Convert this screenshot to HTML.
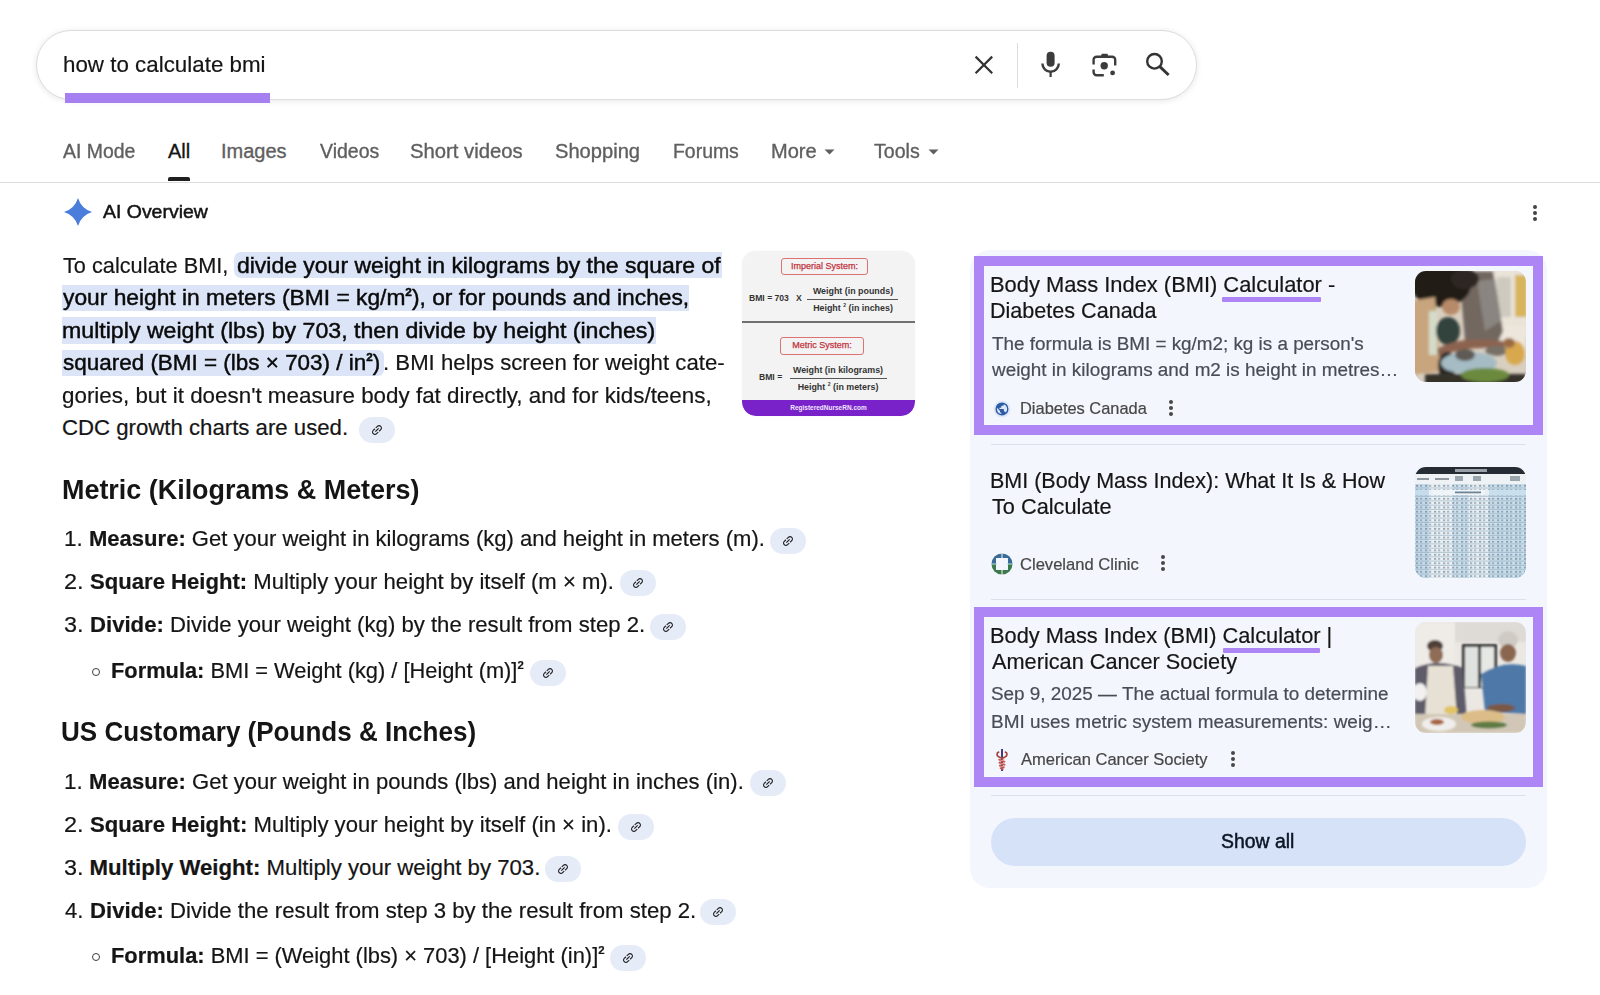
<!DOCTYPE html><html><head><meta charset="utf-8"><style>
html,body{margin:0;padding:0;background:#fff;}
body{width:1600px;height:995px;position:relative;overflow:hidden;font-family:"Liberation Sans", sans-serif;}
.tx{position:absolute;white-space:nowrap;transform-origin:0 0;}
.tx b{font-weight:bold;}
.tx sup{font-weight:bold;font-size:0.52em;vertical-align:0;position:relative;top:-0.78em;line-height:0;}
.md{-webkit-text-stroke:0.45px currentColor;}
.abs{position:absolute;}
.sbox{left:36px;top:30px;width:1159px;height:68px;border:1px solid #dcdcdc;border-radius:35px;background:#fff;box-shadow:0 1px 6px rgba(32,33,36,.10);}
.qbar{left:65px;top:93px;width:205px;height:10px;background:#a67ff0;}
.tabline{left:0;top:182px;width:1600px;height:1px;background:#dcdcdc;}
.tabul{left:168px;top:177px;width:22px;height:3.5px;background:#1f1f1f;border-radius:2px 2px 0 0;}
.chip{position:absolute;width:36px;height:26px;border-radius:13px;background:#e6ebf8;}
.chip svg{position:absolute;left:11px;top:6px;}
.bul{position:absolute;width:6px;height:6px;border:1.3px solid #3c3c3c;border-radius:50%;}
.panel{left:970px;top:250px;width:577px;height:638px;border-radius:20px;background:#f4f6fd;}
.bord{position:absolute;border:10px solid #ad85f4;box-sizing:border-box;}
.div{position:absolute;height:1px;background:#dde0e8;}
.thumb{position:absolute;width:111px;height:111px;border-radius:11px;overflow:hidden;}
.dots{position:absolute;width:4px;}
.dots i{display:block;width:4px;height:4px;border-radius:2px;background:#444;margin-bottom:2px;}
.btn{left:991px;top:818px;width:535px;height:48px;border-radius:24px;background:#d6e2f8;}
.imgcard{left:742px;top:250.5px;width:173px;height:165px;border-radius:14px;background:#f3f3f3;overflow:hidden;box-shadow:0 0 2px rgba(0,0,0,.06);}

</style></head><body>
<div class="abs sbox"></div>
<div class="abs qbar"></div>
<!-- search icons -->
<svg class="abs" style="left:972.3px;top:53px" width="24" height="24" viewBox="0 0 24 24"><path d="M3.6 3.6L20.2 20.2M20.2 3.6L3.6 20.2" stroke="#333" stroke-width="2.2" fill="none"/></svg>
<div class="abs" style="left:1017px;top:43px;width:1px;height:45px;background:#dadce0"></div>
<svg class="abs" style="left:1038px;top:50px" width="24" height="28" viewBox="0 0 24 28"><rect x="8.6" y="1.8" width="8" height="15" rx="4" fill="#3c3c3c"/><path d="M4.4 13.6a8.2 8.2 0 0 0 16.4 0" stroke="#3c3c3c" stroke-width="2.4" fill="none"/><path d="M12.6 21.5V27" stroke="#3c3c3c" stroke-width="2.2"/></svg>
<svg class="abs" style="left:1091px;top:52px" width="26" height="26" viewBox="0 0 26 26"><path d="M2.6 12.4V7.7A3 3 0 0 1 5.6 4.7H21.2A3 3 0 0 1 24.2 7.7V13.4M2.6 17.4V20.3A3 3 0 0 0 5.6 23.3H12.8" stroke="#3c3c3c" stroke-width="2.4" fill="none"/><path d="M9.4 5.6L10.8 1.7H16.4L17.8 5.6Z" fill="#3c3c3c"/><circle cx="13.2" cy="13.8" r="3.7" fill="#3c3c3c"/><circle cx="21.6" cy="20.9" r="2.4" fill="#3c3c3c"/></svg>
<svg class="abs" style="left:1144px;top:51px" width="28" height="28" viewBox="0 0 28 28"><circle cx="10.5" cy="10.3" r="7.3" stroke="#333" stroke-width="2.4" fill="none"/><path d="M15.6 15.4L24.6 24" stroke="#333" stroke-width="2.9"/></svg>
<!-- tabs -->
<div class="abs tabline"></div>
<div class="abs tabul"></div>
<svg class="abs" style="left:824px;top:149px" width="11" height="6" viewBox="0 0 11 6"><path d="M0.5 0.5h10L5.5 5.5z" fill="#5f5f5f"/></svg>
<svg class="abs" style="left:927.5px;top:149px" width="11" height="6" viewBox="0 0 11 6"><path d="M0.5 0.5h10L5.5 5.5z" fill="#5f5f5f"/></svg>
<!-- AI overview star -->
<svg class="abs" style="left:64px;top:198px" width="28" height="28" viewBox="0 0 28 28"><path d="M14 0Q17.3 10.7 28 14Q17.3 17.3 14 28Q10.7 17.3 0 14Q10.7 10.7 14 0Z" fill="#4a7ddc"/></svg>
<div class="dots" style="left:1533px;top:205px"><i></i><i></i><i></i></div>
<!-- image card -->
<div class="abs imgcard">
  <div class="abs" style="left:39px;top:7px;width:87px;height:17.5px;border:1.3px solid #dc7272;border-radius:3px;box-sizing:border-box;font-size:9px;line-height:15px;text-align:center;color:#c2323e;-webkit-text-stroke:0.25px currentColor">Imperial System:</div>
  <div class="abs" style="left:7px;top:42.5px;font-size:8.6px;color:#333;font-weight:bold;white-space:nowrap">BMI = 703&nbsp;&nbsp; X</div>
  <div class="abs" style="left:63px;top:35.5px;width:96px;text-align:center;font-size:8.9px;color:#333;font-weight:bold;white-space:nowrap">Weight (in pounds)</div>
  <div class="abs" style="left:65px;top:48.5px;width:91px;height:1.3px;background:#555"></div>
  <div class="abs" style="left:63px;top:51.5px;width:96px;text-align:center;font-size:8.9px;color:#333;font-weight:bold;white-space:nowrap">Height <sup style="font-size:5px">2</sup> (in inches)</div>
  <div class="abs" style="left:0;top:70.5px;width:173px;height:1.6px;background:#707070"></div>
  <div class="abs" style="left:38px;top:86.5px;width:84px;height:18px;border:1.3px solid #dc7272;border-radius:3px;box-sizing:border-box;font-size:9px;line-height:15.5px;text-align:center;color:#c2323e;-webkit-text-stroke:0.25px currentColor">Metric System:</div>
  <div class="abs" style="left:17px;top:121.5px;font-size:8.6px;color:#333;font-weight:bold">BMI =</div>
  <div class="abs" style="left:41px;top:114.5px;width:110px;text-align:center;font-size:8.9px;color:#333;font-weight:bold;white-space:nowrap">Weight (in kilograms)</div>
  <div class="abs" style="left:48px;top:127.5px;width:97px;height:1.3px;background:#555"></div>
  <div class="abs" style="left:41px;top:130.5px;width:110px;text-align:center;font-size:8.9px;color:#333;font-weight:bold;white-space:nowrap">Height <sup style="font-size:5px">2</sup> (in meters)</div>
  <div class="abs" style="left:0;top:149px;width:173px;height:16px;background:#7a22c9;border-radius:0 0 14px 14px;font-size:6.5px;line-height:16px;text-align:center;color:#f0e6ff;font-weight:bold">RegisteredNurseRN.com</div>
</div>
<!-- chips -->
<div class="chip" style="left:359px;top:416.75px"><svg width="14" height="14" viewBox="0 0 24 24"><path transform="rotate(-45 12 12)" d="M3.9 12c0-1.71 1.39-3.1 3.1-3.1h4V7H7c-2.76 0-5 2.24-5 5s2.24 5 5 5h4v-1.9H7c-1.71 0-3.1-1.39-3.1-3.1zM8 13h8v-2H8v2zm9-6h-4v1.9h4c1.71 0 3.1 1.39 3.1 3.1s-1.39 3.1-3.1 3.1h-4V17h4c2.76 0 5-2.24 5-5s-2.24-5-5-5z" fill="#1f1f1f"/></svg></div>
<div class="chip" style="left:770.0px;top:527.75px"><svg width="14" height="14" viewBox="0 0 24 24"><path transform="rotate(-45 12 12)" d="M3.9 12c0-1.71 1.39-3.1 3.1-3.1h4V7H7c-2.76 0-5 2.24-5 5s2.24 5 5 5h4v-1.9H7c-1.71 0-3.1-1.39-3.1-3.1zM8 13h8v-2H8v2zm9-6h-4v1.9h4c1.71 0 3.1 1.39 3.1 3.1s-1.39 3.1-3.1 3.1h-4V17h4c2.76 0 5-2.24 5-5s-2.24-5-5-5z" fill="#1f1f1f"/></svg></div>
<div class="chip" style="left:619.5px;top:570.45px"><svg width="14" height="14" viewBox="0 0 24 24"><path transform="rotate(-45 12 12)" d="M3.9 12c0-1.71 1.39-3.1 3.1-3.1h4V7H7c-2.76 0-5 2.24-5 5s2.24 5 5 5h4v-1.9H7c-1.71 0-3.1-1.39-3.1-3.1zM8 13h8v-2H8v2zm9-6h-4v1.9h4c1.71 0 3.1 1.39 3.1 3.1s-1.39 3.1-3.1 3.1h-4V17h4c2.76 0 5-2.24 5-5s-2.24-5-5-5z" fill="#1f1f1f"/></svg></div>
<div class="chip" style="left:649.5px;top:613.55px"><svg width="14" height="14" viewBox="0 0 24 24"><path transform="rotate(-45 12 12)" d="M3.9 12c0-1.71 1.39-3.1 3.1-3.1h4V7H7c-2.76 0-5 2.24-5 5s2.24 5 5 5h4v-1.9H7c-1.71 0-3.1-1.39-3.1-3.1zM8 13h8v-2H8v2zm9-6h-4v1.9h4c1.71 0 3.1 1.39 3.1 3.1s-1.39 3.1-3.1 3.1h-4V17h4c2.76 0 5-2.24 5-5s-2.24-5-5-5z" fill="#1f1f1f"/></svg></div>
<div class="chip" style="left:529.5px;top:659.75px"><svg width="14" height="14" viewBox="0 0 24 24"><path transform="rotate(-45 12 12)" d="M3.9 12c0-1.71 1.39-3.1 3.1-3.1h4V7H7c-2.76 0-5 2.24-5 5s2.24 5 5 5h4v-1.9H7c-1.71 0-3.1-1.39-3.1-3.1zM8 13h8v-2H8v2zm9-6h-4v1.9h4c1.71 0 3.1 1.39 3.1 3.1s-1.39 3.1-3.1 3.1h-4V17h4c2.76 0 5-2.24 5-5s-2.24-5-5-5z" fill="#1f1f1f"/></svg></div>
<div class="chip" style="left:749.5px;top:770.45px"><svg width="14" height="14" viewBox="0 0 24 24"><path transform="rotate(-45 12 12)" d="M3.9 12c0-1.71 1.39-3.1 3.1-3.1h4V7H7c-2.76 0-5 2.24-5 5s2.24 5 5 5h4v-1.9H7c-1.71 0-3.1-1.39-3.1-3.1zM8 13h8v-2H8v2zm9-6h-4v1.9h4c1.71 0 3.1 1.39 3.1 3.1s-1.39 3.1-3.1 3.1h-4V17h4c2.76 0 5-2.24 5-5s-2.24-5-5-5z" fill="#1f1f1f"/></svg></div>
<div class="chip" style="left:617.5px;top:813.55px"><svg width="14" height="14" viewBox="0 0 24 24"><path transform="rotate(-45 12 12)" d="M3.9 12c0-1.71 1.39-3.1 3.1-3.1h4V7H7c-2.76 0-5 2.24-5 5s2.24 5 5 5h4v-1.9H7c-1.71 0-3.1-1.39-3.1-3.1zM8 13h8v-2H8v2zm9-6h-4v1.9h4c1.71 0 3.1 1.39 3.1 3.1s-1.39 3.1-3.1 3.1h-4V17h4c2.76 0 5-2.24 5-5s-2.24-5-5-5z" fill="#1f1f1f"/></svg></div>
<div class="chip" style="left:544.8px;top:856.25px"><svg width="14" height="14" viewBox="0 0 24 24"><path transform="rotate(-45 12 12)" d="M3.9 12c0-1.71 1.39-3.1 3.1-3.1h4V7H7c-2.76 0-5 2.24-5 5s2.24 5 5 5h4v-1.9H7c-1.71 0-3.1-1.39-3.1-3.1zM8 13h8v-2H8v2zm9-6h-4v1.9h4c1.71 0 3.1 1.39 3.1 3.1s-1.39 3.1-3.1 3.1h-4V17h4c2.76 0 5-2.24 5-5s-2.24-5-5-5z" fill="#1f1f1f"/></svg></div>
<div class="chip" style="left:700.2px;top:899.25px"><svg width="14" height="14" viewBox="0 0 24 24"><path transform="rotate(-45 12 12)" d="M3.9 12c0-1.71 1.39-3.1 3.1-3.1h4V7H7c-2.76 0-5 2.24-5 5s2.24 5 5 5h4v-1.9H7c-1.71 0-3.1-1.39-3.1-3.1zM8 13h8v-2H8v2zm9-6h-4v1.9h4c1.71 0 3.1 1.39 3.1 3.1s-1.39 3.1-3.1 3.1h-4V17h4c2.76 0 5-2.24 5-5s-2.24-5-5-5z" fill="#1f1f1f"/></svg></div>
<div class="chip" style="left:610.2px;top:944.75px"><svg width="14" height="14" viewBox="0 0 24 24"><path transform="rotate(-45 12 12)" d="M3.9 12c0-1.71 1.39-3.1 3.1-3.1h4V7H7c-2.76 0-5 2.24-5 5s2.24 5 5 5h4v-1.9H7c-1.71 0-3.1-1.39-3.1-3.1zM8 13h8v-2H8v2zm9-6h-4v1.9h4c1.71 0 3.1 1.39 3.1 3.1s-1.39 3.1-3.1 3.1h-4V17h4c2.76 0 5-2.24 5-5s-2.24-5-5-5z" fill="#1f1f1f"/></svg></div>
<div class="bul" style="left:92.2px;top:667.5px"></div>
<div class="bul" style="left:92.2px;top:952.5px"></div>
<!-- right panel -->
<div class="abs panel"></div>
<div class="bord" style="left:974px;top:256px;width:569px;height:179px"></div>
<div class="bord" style="left:973.5px;top:607px;width:569px;height:180px"></div>
<div class="abs" style="left:1222px;top:297px;width:99px;height:5px;background:#ad85f4;border-radius:1px"></div>
<div class="abs" style="left:1223px;top:647.5px;width:97px;height:5px;background:#ad85f4;border-radius:1px"></div>
<div class="div" style="left:991px;top:444px;width:535px"></div>
<div class="div" style="left:991px;top:599px;width:535px"></div>
<div class="div" style="left:991px;top:795px;width:535px"></div>
<div class="abs btn"></div>
<!-- favicons -->
<svg class="abs" style="left:993px;top:400px" width="18" height="18" viewBox="0 0 18 18"><circle cx="9" cy="9" r="8.6" fill="#dde8fa"/><g transform="translate(1.3 1.3) scale(0.64)"><circle cx="12" cy="12" r="10.2" fill="#2d5aa3"/><path d="M11 19.93c-3.95-.49-7-3.85-7-7.93 0-.62.08-1.21.21-1.79L9 15v1c0 1.1.9 2 2 2v1.93zM17.9 17.39c-.26-.81-1-1.39-1.9-1.39h-1v-3c0-.55-.45-1-1-1H8v-2h2c.55 0 1-.45 1-1V7h2c1.1 0 2-.9 2-2v-.41c2.93 1.19 5 4.06 5 7.41 0 2.08-.8 3.97-2.1 5.39z" fill="#dbe6fa"/></g></svg>
<svg class="abs" style="left:990.9px;top:553.1px" width="22" height="22" viewBox="0 0 22 22"><defs><clipPath id="ccc"><path d="M0 0H22V22H0Z M5 5.5Q5 5 5.5 5H16.5Q17 5 17 5.5V16.5Q17 17 16.5 17H5.5Q5 17 5 16.5Z" clip-rule="evenodd"/></clipPath></defs><g clip-path="url(#ccc)"><path d="M0.5 11A10.5 10.5 0 0 1 21.5 11Z" fill="#3a6c98"/><path d="M0.5 11A10.5 10.5 0 0 0 21.5 11Z" fill="#3c7a4c"/></g><rect x="10.5" y="0" width="1" height="6" fill="#f3f5fc"/><rect x="10.5" y="16" width="1" height="6" fill="#f3f5fc"/><rect x="0" y="10.5" width="6" height="1" fill="#b9dcd8"/><rect x="16" y="10.5" width="6" height="1" fill="#b9dcd8"/></svg>
<svg class="abs" style="left:994px;top:747px" width="16" height="26" viewBox="0 0 16 26"><path d="M8 2v22" stroke="#33357a" stroke-width="1.9"/><path d="M4.6 5.2C2.6 5.6 2.4 8.6 4.6 9.8L8.4 11.6M11.4 5.2C13.4 5.6 13.6 8.6 11.4 9.8L7.4 11.8" stroke="#a8443f" stroke-width="1.7" fill="none" stroke-linecap="round"/><path d="M5.2 12.6L10.6 14.8M5.4 15.6L10.6 17.8M5.8 18.6L9.8 20.4M6.6 21.2L8.8 22.2" stroke="#c4564e" stroke-width="1.7" fill="none" stroke-linecap="round"/><path d="M10.4 12.6L5.6 14.4M10.4 15.8L5.8 17.4M9.8 18.8L6.2 20.2" stroke="#e8938a" stroke-width="1.1" fill="none"/></svg>
<div class="dots" style="left:1169px;top:400px"><i style="background:#474747"></i><i style="background:#474747"></i><i style="background:#474747"></i></div>
<div class="dots" style="left:1160.5px;top:555px"><i style="background:#474747"></i><i style="background:#474747"></i><i style="background:#474747"></i></div>
<div class="dots" style="left:1230.5px;top:751px"><i style="background:#474747"></i><i style="background:#474747"></i><i style="background:#474747"></i></div>
<!-- thumbnails -->
<div class="thumb" style="left:1415px;top:271px"><svg width="111" height="111" viewBox="0 0 111 111"><defs><filter id="bl1" x="-20%" y="-20%" width="140%" height="140%"><feGaussianBlur stdDeviation="1.6"/></filter></defs>
<rect width="111" height="111" fill="#d9cfc0"/>
<g filter="url(#bl1)">
<rect x="60" y="-5" width="56" height="70" fill="#e9e3d8"/>
<rect x="82" y="6" width="14" height="40" fill="#cfcac0"/>
<rect x="100" y="4" width="12" height="42" fill="#d8b45c"/>
<rect x="70" y="55" width="41" height="30" fill="#ece6dc"/>
<path d="M44 0 L78 0 L88 60 L80 78 L50 70 Z" fill="#726860"/>
<path d="M62 10 L80 8 L86 50 L70 60Z" fill="#8a8580"/>
<ellipse cx="26" cy="14" rx="30" ry="22" fill="#231b17"/>
<ellipse cx="50" cy="8" rx="14" ry="10" fill="#2e2520"/>
<ellipse cx="36" cy="36" rx="9" ry="8" fill="#b78b6a"/>
<path d="M-4 30 L20 26 L26 100 L-4 104Z" fill="#c8a57d"/>
<rect x="14" y="40" width="8" height="44" fill="#d4dcc8"/>
<ellipse cx="33" cy="60" rx="12" ry="14" fill="#33423c"/>
<path d="M22 78 Q45 64 88 70 L90 78 Q50 74 24 86Z" fill="#8c6450"/>
<ellipse cx="32" cy="95" rx="9" ry="14" fill="#2b2826"/>
<ellipse cx="54" cy="92" rx="28" ry="11" fill="#a5bcc4"/>
<ellipse cx="50" cy="84" rx="10" ry="6" fill="#5e5a55"/>
<ellipse cx="82" cy="80" rx="12" ry="5" fill="#777066"/>
<ellipse cx="100" cy="82" rx="10" ry="12" fill="#d8a84e"/>
<ellipse cx="94" cy="72" rx="6" ry="5" fill="#9b6a42"/>
<rect x="10" y="103" width="101" height="12" fill="#35302b"/>
<ellipse cx="70" cy="104" rx="24" ry="7" fill="#6c8a3e"/>
</g></svg></div>
<div class="thumb" style="left:1415px;top:467px"><svg width="111" height="111" viewBox="0 0 111 111"><defs>
<pattern id="rows" width="9" height="4.3" patternUnits="userSpaceOnUse"><rect y="3.2" width="9" height="1" fill="#7f98ad" opacity=".55"/><rect x="1" y="0.8" width="2.2" height="1.6" fill="#55606a" opacity=".55"/><rect x="5" y="0.8" width="2.2" height="1.6" fill="#55606a" opacity=".45"/></pattern></defs>
<rect width="111" height="111" fill="#d3e5f1"/>
<rect x="0" y="17" width="14" height="94" fill="#c5dcec"/>
<rect x="14" y="17" width="24" height="94" fill="#e9f1f6"/>
<rect x="38" y="17" width="16" height="94" fill="#cde1ef"/>
<rect x="54" y="17" width="20" height="94" fill="#e6eff5"/>
<rect x="74" y="17" width="37" height="94" fill="#c9dfee"/>
<rect y="28" width="111" height="83" fill="url(#rows)"/>
<rect y="17" width="111" height="6" fill="url(#rows)"/>
<rect x="18" y="23" width="52" height="5" fill="#eef4f8"/>
<rect x="40" y="24.5" width="26" height="1.8" fill="#6f8597"/>
<rect width="111" height="7" fill="#262c33"/>
<rect x="40" y="2" width="32" height="3" fill="#b8bec6" opacity=".8"/>
<rect y="7" width="111" height="10" fill="#eef2f5"/>
<rect x="2" y="11" width="12" height="2" fill="#8c979f"/><rect x="20" y="11" width="14" height="2" fill="#8c979f"/><rect x="40" y="9" width="8" height="5" fill="#9aa6ae"/><rect x="58" y="9" width="8" height="5" fill="#9aa6ae"/><rect x="95" y="9" width="10" height="5" fill="#9aa6ae"/>
</svg></div>
<div class="thumb" style="left:1415px;top:622px"><svg width="111" height="111" viewBox="0 0 111 111"><defs><filter id="bl3" x="-20%" y="-20%" width="140%" height="140%"><feGaussianBlur stdDeviation="1.3"/></filter></defs>
<rect width="111" height="111" fill="#ebe7e3"/>
<g filter="url(#bl3)">
<rect x="40" y="0" width="71" height="20" fill="#dedad5"/>
<rect x="47" y="22" width="35" height="44" fill="#303030"/>
<rect x="50" y="25" width="13" height="40" fill="#dfe2de"/>
<rect x="66" y="25" width="13" height="40" fill="#e6e8e4"/>
<rect x="0" y="0" width="40" height="55" fill="#efebe7"/>
<ellipse cx="20" cy="24" rx="8" ry="6" fill="#4e4038"/>
<ellipse cx="21" cy="33" rx="7" ry="8" fill="#8e6c55"/>
<path d="M0 46 Q22 36 48 46 L52 100 L0 100Z" fill="#5f5c6a"/>
<path d="M13 44 L38 44 L42 96 L10 96Z" fill="#e6e1d4"/>
<ellipse cx="5" cy="70" rx="7" ry="9" fill="#f2f0f0"/>
<ellipse cx="93" cy="18" rx="10" ry="9" fill="#cfcbc4"/>
<ellipse cx="93" cy="31" rx="8" ry="9" fill="#8a6650"/>
<path d="M66 52 Q88 38 111 44 L111 92 L70 90Z" fill="#4d78a8"/>
<ellipse cx="86" cy="86" rx="14" ry="4" fill="#7a5844"/>
<rect x="0" y="92" width="111" height="19" fill="#d2c7b6"/>
<ellipse cx="68" cy="95" rx="22" ry="7" fill="#dcbd88"/>
<ellipse cx="74" cy="103" rx="18" ry="3.5" fill="#5f7c45"/>
<ellipse cx="24" cy="102" rx="17" ry="7" fill="#f0eeec"/>
<ellipse cx="22" cy="100" rx="7" ry="3" fill="#a8643c"/>
<ellipse cx="36" cy="88" rx="7" ry="4" fill="#e2c464"/>
</g></svg></div>
<div class="abs" style="left:233.6px;top:252.3px;width:488.8px;height:26.2px;background:#dce5f7;border-radius:7px 0 0 7px"></div>
<div class="abs" style="left:62px;top:284.8px;width:626.6px;height:26.6px;background:#dce5f7"></div>
<div class="abs" style="left:62px;top:317.3px;width:594px;height:26.5px;background:#dce5f7"></div>
<div class="abs" style="left:62px;top:349.9px;width:321.5px;height:26.3px;background:#dce5f7;border-radius:0 6px 6px 0"></div>
<div class="tx" id="q" style="left:63.01px;top:47.50px;font-size:22.5px;line-height:34px;color:#151515;-webkit-text-stroke:0.2px currentColor;transform:scaleX(0.9936)">how to calculate bmi</div>
<div class="tx" id="tab1" style="left:62.50px;top:136.25px;font-size:20px;line-height:30px;color:#5f5f5f;-webkit-text-stroke:0.35px currentColor;transform:scaleX(0.9703)">AI Mode</div>
<div class="tx" id="tab2" style="left:168.00px;top:136.25px;font-size:20px;line-height:30px;color:#151515;-webkit-text-stroke:0.35px currentColor;transform:scaleX(1.0000)">All</div>
<div class="tx" id="tab3" style="left:221.00px;top:136.25px;font-size:20px;line-height:30px;color:#5f5f5f;-webkit-text-stroke:0.35px currentColor;transform:scaleX(1.0000)">Images</div>
<div class="tx" id="tab4" style="left:319.50px;top:136.25px;font-size:20px;line-height:30px;color:#5f5f5f;-webkit-text-stroke:0.35px currentColor;transform:scaleX(0.9750)">Videos</div>
<div class="tx" id="tab5" style="left:410.49px;top:136.25px;font-size:20px;line-height:30px;color:#5f5f5f;-webkit-text-stroke:0.35px currentColor;transform:scaleX(1.0136)">Short videos</div>
<div class="tx" id="tab6" style="left:555.49px;top:136.25px;font-size:20px;line-height:30px;color:#5f5f5f;-webkit-text-stroke:0.35px currentColor;transform:scaleX(1.0060)">Shopping</div>
<div class="tx" id="tab7" style="left:672.73px;top:136.25px;font-size:20px;line-height:30px;color:#5f5f5f;-webkit-text-stroke:0.35px currentColor;transform:scaleX(0.9712)">Forums</div>
<div class="tx" id="tab8" style="left:770.70px;top:136.25px;font-size:20px;line-height:30px;color:#5f5f5f;-webkit-text-stroke:0.35px currentColor;transform:scaleX(1.0023)">More</div>
<div class="tx" id="tab9" style="left:874.00px;top:136.25px;font-size:20px;line-height:30px;color:#5f5f5f;-webkit-text-stroke:0.35px currentColor;transform:scaleX(0.9783)">Tools</div>
<div class="tx" id="aio" style="left:103.00px;top:197.50px;font-size:18.9px;line-height:28px;color:#141414;-webkit-text-stroke:0.5px currentColor;transform:scaleX(1.0294)">AI Overview</div>
<div class="tx" id="p1a" style="left:63.00px;top:249.00px;font-size:22.2px;line-height:33px;color:#151515;-webkit-text-stroke:0.2px currentColor;transform:scaleX(0.9790)">To calculate BMI,</div>
<div class="tx" id="p1b" style="left:236.57px;top:249.00px;font-size:22.2px;line-height:33px;color:#0a0a0a;-webkit-text-stroke:0.2px currentColor;transform:scaleX(1.0347)"><span class="md">divide your weight in kilograms by the square of</span></div>
<div class="tx" id="p2" style="left:62.50px;top:281.40px;font-size:22.2px;line-height:33px;color:#0a0a0a;-webkit-text-stroke:0.2px currentColor;transform:scaleX(1.0264)"><span class="md">your height in meters (BMI = kg/m<sup>2</sup>), or for pounds and inches,</span></div>
<div class="tx" id="p3" style="left:61.96px;top:313.80px;font-size:22.2px;line-height:33px;color:#0a0a0a;-webkit-text-stroke:0.2px currentColor;transform:scaleX(1.0432)"><span class="md">multiply weight (lbs) by 703, then divide by height (inches)</span></div>
<div class="tx" id="p4a" style="left:63.00px;top:346.20px;font-size:22.2px;line-height:33px;color:#0a0a0a;-webkit-text-stroke:0.2px currentColor;transform:scaleX(1.0120)"><span class="md">squared (BMI = (lbs × 703) / in<sup>2</sup>)</span></div>
<div class="tx" id="p4b" style="left:382.75px;top:346.20px;font-size:22.2px;line-height:33px;color:#151515;-webkit-text-stroke:0.2px currentColor;transform:scaleX(1.0001)">. BMI helps screen for weight cate-</div>
<div class="tx" id="p5" style="left:61.99px;top:378.60px;font-size:22.2px;line-height:33px;color:#151515;-webkit-text-stroke:0.2px currentColor;transform:scaleX(1.0089)">gories, but it doesn't measure body fat directly, and for kids/teens,</div>
<div class="tx" id="p6" style="left:62.00px;top:411.00px;font-size:22.2px;line-height:33px;color:#151515;-webkit-text-stroke:0.2px currentColor;transform:scaleX(1.0000)">CDC growth charts are used.</div>
<div class="tx" id="h1" style="left:61.66px;top:468.50px;font-size:27.8px;line-height:42px;color:#151515;font-weight:bold;transform:scaleX(0.9683)">Metric (Kilograms &amp; Meters)</div>
<div class="tx" id="h2" style="left:61.13px;top:711.00px;font-size:27.8px;line-height:42px;color:#151515;font-weight:bold;transform:scaleX(0.9364)">US Customary (Pounds &amp; Inches)</div>
<div class="tx" id="m1n" style="left:64.49px;top:522.00px;font-size:22.2px;line-height:33px;color:#151515;-webkit-text-stroke:0.2px currentColor;transform:scaleX(1.0125)">1.</div>
<div class="tx" id="m2n" style="left:63.74px;top:564.70px;font-size:22.2px;line-height:33px;color:#151515;-webkit-text-stroke:0.2px currentColor;transform:scaleX(1.0563)">2.</div>
<div class="tx" id="m3n" style="left:63.74px;top:607.80px;font-size:22.2px;line-height:33px;color:#151515;-webkit-text-stroke:0.2px currentColor;transform:scaleX(1.0563)">3.</div>
<div class="tx" id="m1" style="left:89.31px;top:522.00px;font-size:22.2px;line-height:33px;color:#151515;-webkit-text-stroke:0.2px currentColor;transform:scaleX(0.9929)"><b>Measure:</b> Get your weight in kilograms (kg) and height in meters (m).</div>
<div class="tx" id="m2" style="left:89.50px;top:564.70px;font-size:22.2px;line-height:33px;color:#151515;-webkit-text-stroke:0.2px currentColor;transform:scaleX(0.9962)"><b>Square Height:</b> Multiply your height by itself (m × m).</div>
<div class="tx" id="m3" style="left:89.50px;top:607.80px;font-size:22.2px;line-height:33px;color:#151515;-webkit-text-stroke:0.2px currentColor;transform:scaleX(0.9982)"><b>Divide:</b> Divide your weight (kg) by the result from step 2.</div>
<div class="tx" id="m4" style="left:110.92px;top:654.00px;font-size:22.2px;line-height:33px;color:#151515;-webkit-text-stroke:0.2px currentColor;transform:scaleX(0.9835)"><b>Formula:</b> BMI = Weight (kg) / [Height (m)]<sup>2</sup></div>
<div class="tx" id="u1n" style="left:64.49px;top:764.70px;font-size:22.2px;line-height:33px;color:#151515;-webkit-text-stroke:0.2px currentColor;transform:scaleX(1.0125)">1.</div>
<div class="tx" id="u2n" style="left:63.74px;top:807.80px;font-size:22.2px;line-height:33px;color:#151515;-webkit-text-stroke:0.2px currentColor;transform:scaleX(1.0563)">2.</div>
<div class="tx" id="u3n" style="left:63.74px;top:850.50px;font-size:22.2px;line-height:33px;color:#151515;-webkit-text-stroke:0.2px currentColor;transform:scaleX(1.0563)">3.</div>
<div class="tx" id="u4n" style="left:64.80px;top:893.50px;font-size:22.2px;line-height:33px;color:#151515;-webkit-text-stroke:0.2px currentColor;transform:scaleX(0.9941)">4.</div>
<div class="tx" id="u1" style="left:89.31px;top:764.70px;font-size:22.2px;line-height:33px;color:#151515;-webkit-text-stroke:0.2px currentColor;transform:scaleX(0.9942)"><b>Measure:</b> Get your weight in pounds (lbs) and height in inches (in).</div>
<div class="tx" id="u2" style="left:89.50px;top:807.80px;font-size:22.2px;line-height:33px;color:#151515;-webkit-text-stroke:0.2px currentColor;transform:scaleX(0.9971)"><b>Square Height:</b> Multiply your height by itself (in × in).</div>
<div class="tx" id="u3" style="left:89.50px;top:850.50px;font-size:22.2px;line-height:33px;color:#151515;-webkit-text-stroke:0.2px currentColor;transform:scaleX(1.0000)"><b>Multiply Weight:</b> Multiply your weight by 703.</div>
<div class="tx" id="u4" style="left:89.50px;top:893.50px;font-size:22.2px;line-height:33px;color:#151515;-webkit-text-stroke:0.2px currentColor;transform:scaleX(0.9992)"><b>Divide:</b> Divide the result from step 3 by the result from step 2.</div>
<div class="tx" id="u5" style="left:110.91px;top:939.00px;font-size:22.2px;line-height:33px;color:#151515;-webkit-text-stroke:0.2px currentColor;transform:scaleX(0.9862)"><b>Formula:</b> BMI = (Weight (lbs) × 703) / [Height (in)]<sup>2</sup></div>
<div class="tx" id="c1t1" style="left:989.95px;top:268.60px;font-size:21.3px;line-height:32px;color:#151515;-webkit-text-stroke:0.2px currentColor;transform:scaleX(1.0270)">Body Mass Index (BMI) Calculator -</div>
<div class="tx" id="c1t2" style="left:989.98px;top:295.30px;font-size:21.3px;line-height:32px;color:#151515;-webkit-text-stroke:0.2px currentColor;transform:scaleX(1.0123)">Diabetes Canada</div>
<div class="tx" id="c1s1" style="left:992.00px;top:329.70px;font-size:18.8px;line-height:28px;color:#474c55;-webkit-text-stroke:0.2px currentColor;transform:scaleX(1.0035)">The formula is BMI = kg/m2; kg is a person's</div>
<div class="tx" id="c1s2" style="left:992.00px;top:356.40px;font-size:18.8px;line-height:28px;color:#474c55;-webkit-text-stroke:0.2px currentColor;transform:scaleX(1.0057)">weight in kilograms and m2 is height in metres…</div>
<div class="tx" id="c1src" style="left:1020.18px;top:396.20px;font-size:16.1px;line-height:24px;color:#474747;-webkit-text-stroke:0.2px currentColor;transform:scaleX(1.0202)">Diabetes Canada</div>
<div class="tx" id="c2t1" style="left:989.98px;top:465.00px;font-size:21.3px;line-height:32px;color:#151515;-webkit-text-stroke:0.2px currentColor;transform:scaleX(1.0085)">BMI (Body Mass Index): What It Is &amp; How</div>
<div class="tx" id="c2t2" style="left:992.00px;top:491.30px;font-size:21.3px;line-height:32px;color:#151515;-webkit-text-stroke:0.2px currentColor;transform:scaleX(1.0198)">To Calculate</div>
<div class="tx" id="c2src" style="left:1020.17px;top:551.80px;font-size:16.1px;line-height:24px;color:#474747;-webkit-text-stroke:0.2px currentColor;transform:scaleX(1.0298)">Cleveland Clinic</div>
<div class="tx" id="c3t1" style="left:989.95px;top:619.70px;font-size:21.3px;line-height:32px;color:#151515;-webkit-text-stroke:0.2px currentColor;transform:scaleX(1.0230)">Body Mass Index (BMI) Calculator |</div>
<div class="tx" id="c3t2" style="left:992.00px;top:645.90px;font-size:21.3px;line-height:32px;color:#151515;-webkit-text-stroke:0.2px currentColor;transform:scaleX(1.0199)">American Cancer Society</div>
<div class="tx" id="c3s1" style="left:990.99px;top:680.20px;font-size:18.8px;line-height:28px;color:#474c55;-webkit-text-stroke:0.2px currentColor;transform:scaleX(1.0056)">Sep 9, 2025 — The actual formula to determine</div>
<div class="tx" id="c3s2" style="left:990.99px;top:707.50px;font-size:18.8px;line-height:28px;color:#474c55;-webkit-text-stroke:0.2px currentColor;transform:scaleX(1.0102)">BMI uses metric system measurements: weig…</div>
<div class="tx" id="c3src" style="left:1021.20px;top:747.40px;font-size:16.1px;line-height:24px;color:#474747;-webkit-text-stroke:0.2px currentColor;transform:scaleX(1.0275)">American Cancer Society</div>
<div class="tx" id="show" style="left:1221.23px;top:825.80px;font-size:20px;line-height:30px;color:#0b1726;-webkit-text-stroke:0.5px currentColor;transform:scaleX(0.9703)">Show all</div>
</body></html>
